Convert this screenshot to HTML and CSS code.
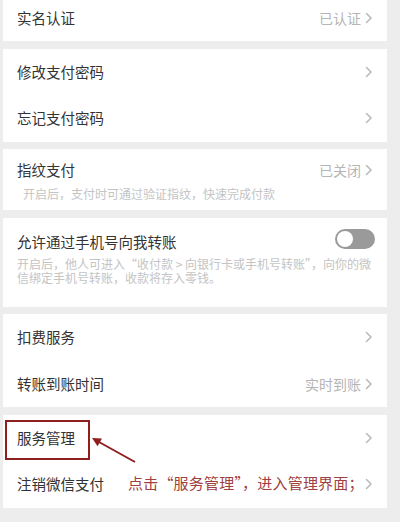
FILE: index.html
```html
<!DOCTYPE html>
<html lang="zh">
<head>
<meta charset="utf-8">
<link rel="stylesheet" href="styles.css">
</head>
<body>
<div class="page">
  <div class="card">
    <div class="row first"><span class="label">实名认证</span><span class="right"><span class="value">已认证</span><svg class="chev" viewBox="0 0 8 12" width="8" height="12"><polyline points="1.5,1.5 6,6 1.5,10.5"/></svg></span></div>
  </div>
  <div class="card">
    <div class="row"><span class="label">修改支付密码</span><span class="right"><svg class="chev" viewBox="0 0 8 12" width="8" height="12"><polyline points="1.5,1.5 6,6 1.5,10.5"/></svg></span></div>
    <div class="row"><span class="label">忘记支付密码</span><span class="right"><svg class="chev" viewBox="0 0 8 12" width="8" height="12"><polyline points="1.5,1.5 6,6 1.5,10.5"/></svg></span></div>
  </div>
  <div class="card block fp">
    <div class="head"><span class="label">指纹支付</span><span class="right"><span class="value">已关闭</span><svg class="chev" viewBox="0 0 8 12" width="8" height="12"><polyline points="1.5,1.5 6,6 1.5,10.5"/></svg></span></div>
    <p class="desc indent">开启后，支付时可通过验证指纹，快速完成付款</p>
  </div>
  <div class="card block phone">
    <div class="head"><span class="label">允许通过手机号向我转账</span><span class="toggle"><span class="knob"></span></span></div>
    <p class="desc">开启后，他人可进入“收付款 &gt; 向银行卡或手机号转账”，向你的微信绑定手机号转账，收款将存入零钱。</p>
  </div>
  <div class="card">
    <div class="row"><span class="label">扣费服务</span><span class="right"><svg class="chev" viewBox="0 0 8 12" width="8" height="12"><polyline points="1.5,1.5 6,6 1.5,10.5"/></svg></span></div>
    <div class="row"><span class="label">转账到账时间</span><span class="right"><span class="value">实时到账</span><svg class="chev" viewBox="0 0 8 12" width="8" height="12"><polyline points="1.5,1.5 6,6 1.5,10.5"/></svg></span></div>
  </div>
  <div class="card">
    <div class="row"><span class="label">服务管理</span><span class="right"><svg class="chev" viewBox="0 0 8 12" width="8" height="12"><polyline points="1.5,1.5 6,6 1.5,10.5"/></svg></span></div>
    <div class="row"><span class="label">注销微信支付</span><span class="right"><svg class="chev" viewBox="0 0 8 12" width="8" height="12"><polyline points="1.5,1.5 6,6 1.5,10.5"/></svg></span></div>
  </div>
</div>
<div class="mark-box"></div>
<svg class="mark-arrow" viewBox="0 0 400 522" width="400" height="522">
  <line x1="135" y1="462" x2="99" y2="442"/>
  <polygon points="92,438 102,438.6 97.6,446.2"/>
</svg>
<div class="mark-text">点击“服务管理”，进入管理界面；</div>
</body>
</html>
```
FILE: styles.css
```css
html, body {
  margin: 0;
  padding: 0;
}
body {
  width: 400px;
  height: 522px;
  overflow: hidden;
  background: #ededed;
  position: relative;
  font-family: "Noto Sans CJK SC", "Noto Sans", sans-serif;
  color: #353535;
}
.page {
  display: flex;
  flex-direction: column;
  gap: 7.5px;
  padding: 0 13px 0 3px;
}
.card {
  background: #ffffff;
}
.row {
  height: 46.5px;
  display: flex;
  align-items: center;
  justify-content: space-between;
  padding: 0 14px 0 14px;
}
.row.first {
  height: 36px;
  padding-bottom: 5px;
}
.label {
  font-size: 14.5px;
  line-height: 20px;
  color: #333333;
}
.right {
  display: flex;
  align-items: center;
  gap: 4px;
}
.value {
  font-size: 14px;
  line-height: 20px;
  color: #b5b5b5;
}
.chev {
  display: block;
}
.chev polyline {
  fill: none;
  stroke: #b8b8b8;
  stroke-width: 1.5;
  stroke-linecap: round;
  stroke-linejoin: round;
}
.block {
  padding: 0 14px;
}
.head {
  display: flex;
  align-items: center;
  justify-content: space-between;
  height: 20px;
}
.fp {
  padding-top: 11px;
  padding-bottom: 9px;
}
.phone {
  padding-top: 14px;
  padding-bottom: 22px;
}
.desc {
  margin: 7px 0 0 0;
  font-size: 12px;
  line-height: 14px;
  color: #c4c4c4;
}
.phone .desc {
  margin-top: 5px;
  margin-right: -4px;
}
.desc.indent {
  padding-left: 6px;
}
.toggle {
  width: 40px;
  height: 20px;
  border-radius: 10px;
  background: #9a9a9a;
  display: flex;
  align-items: center;
  padding: 0 2px;
  box-sizing: border-box;
  margin-right: -2px;
  margin-top: -5px;
}
.knob {
  width: 16px;
  height: 16px;
  border-radius: 50%;
  background: #ffffff;
}
.mark-box {
  position: absolute;
  left: 5px;
  top: 420px;
  width: 81px;
  height: 36px;
  border: 2px solid #8e1f1f;
}
.mark-arrow {
  position: absolute;
  left: 0;
  top: 0;
}
.mark-arrow line {
  stroke: #8e1f1f;
  stroke-width: 2;
}
.mark-arrow polygon {
  fill: #8e1f1f;
}
.mark-text {
  position: absolute;
  left: 128px;
  top: 473px;
  font-size: 15px;
  letter-spacing: 0.2px;
  line-height: 20px;
  color: #a04040;
  white-space: nowrap;
}
```
